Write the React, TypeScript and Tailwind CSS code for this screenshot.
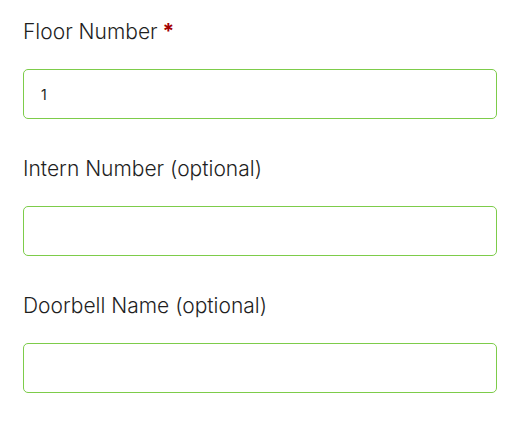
import React from "react"

function Field({ label, required, value }: { label: string; required?: boolean; value?: string }) {
  return (
    <div className="flex flex-col gap-[23px]">
      <label className="text-[21px] leading-[28px] font-light text-[#1f1f1f]">
        {label}
        {required && <span className="text-[#a30000] font-bold ml-[5px]">*</span>}
      </label>
      <input
        defaultValue={value}
        className="h-[50px] w-full rounded-[5px] border border-[#7dcc4a] bg-white px-[17px] text-[14px] text-[#222222] outline-none"
      />
    </div>
  )
}

export default function App() {
  return (
    <div className="min-h-screen bg-white px-[23px] pt-[18px] pr-[27px] font-['Inter',sans-serif]">
      <div className="flex flex-col gap-[36px]">
        <Field label="Floor Number" required value="1" />
        <Field label="Intern Number (optional)" />
        <Field label="Doorbell Name (optional)" />
      </div>
    </div>
  )
}
